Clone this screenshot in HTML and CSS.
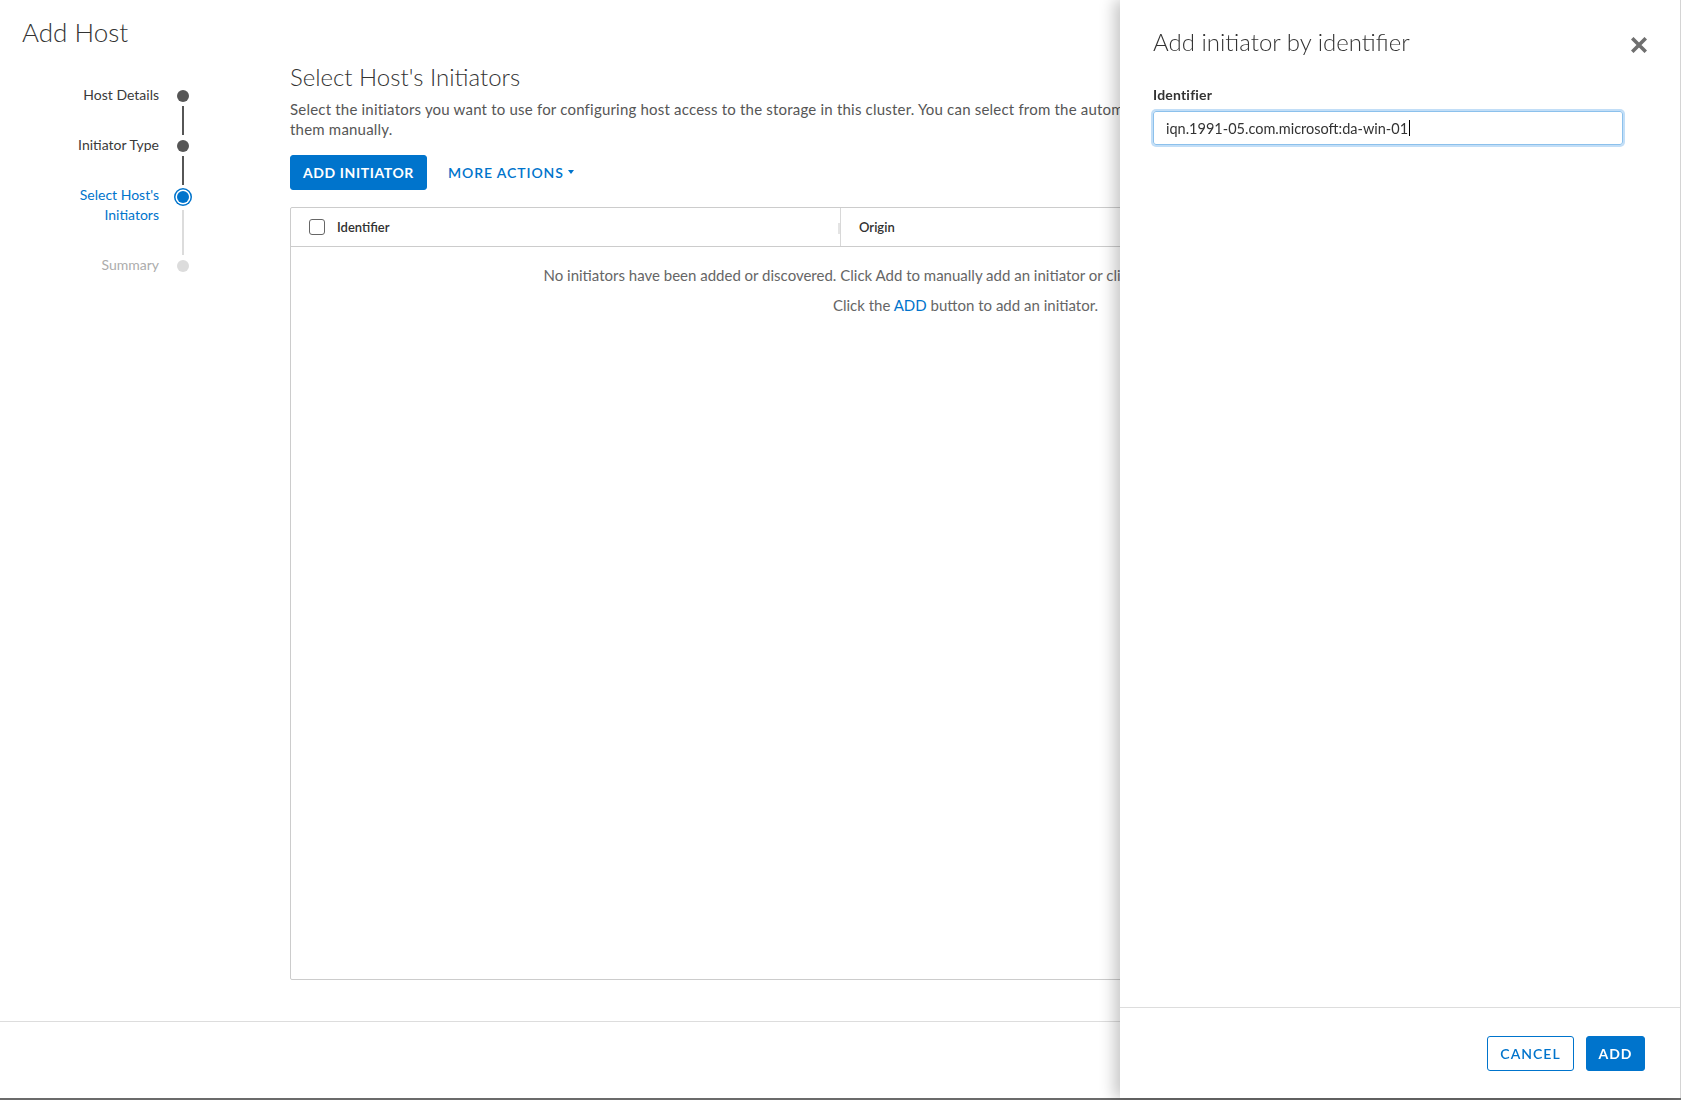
FILE: index.html
```html
<!DOCTYPE html>
<html lang="en">
<head>
<meta charset="utf-8">
<title>Add Host</title>
<link rel="stylesheet" href="styles.css">
</head>
<body>
<div class="page">
  <h1 class="page-title">Add Host</h1>
  <div class="wizard">
    <nav class="steps">
      <div class="step done">
        <div class="step-label">Host Details</div>
        <div class="step-marker"><span class="dot"></span><span class="line"></span></div>
      </div>
      <div class="step done">
        <div class="step-label">Initiator Type</div>
        <div class="step-marker"><span class="dot"></span><span class="line line-todo"></span></div>
      </div>
      <div class="step current">
        <div class="step-label">Select Host's<br>Initiators</div>
        <div class="step-marker"><span class="dot"></span><span class="line line-todo"></span></div>
      </div>
      <div class="step todo last">
        <div class="step-label">Summary</div>
        <div class="step-marker"><span class="dot"></span></div>
      </div>
    </nav>
    <main class="content">
      <h2 class="content-title">Select Host's Initiators</h2>
      <p class="desc"><span class="desc-line">Select the initiators you want to use for configuring host access to the storage in this cluster. You can select from the automatically discovered initiators or add</span><br>them manually.</p>
      <div class="toolbar">
        <button class="btn btn-primary" type="button">Add Initiator</button>
        <button class="btn btn-link" type="button">More Actions<span class="caret"></span></button>
      </div>
      <div class="grid">
        <div class="grid-head">
          <div class="col col-id"><span class="checkbox"></span><span>Identifier</span><span class="resize"></span></div>
          <div class="col col-origin">Origin</div>
        </div>
        <div class="grid-empty">
          <p>No initiators have been added or discovered. Click Add to manually add an initiator or click Discover to find initiators on the host.</p>
          <p>Click the <span class="link">ADD</span> button to add an initiator.</p>
        </div>
      </div>
    </main>
  </div>
  <footer class="page-footer"></footer>
</div>

<aside class="panel">
  <div class="panel-head">
    <h3 class="panel-title">Add initiator by identifier</h3>
    <button class="close" type="button" aria-label="Close">
      <svg width="16" height="16" viewBox="0 0 16 16"><path d="M2.5 2.5 L13.5 13.5 M13.5 2.5 L2.5 13.5" stroke="#6f6f6f" stroke-width="3.6" stroke-linecap="square" fill="none"/></svg>
    </button>
  </div>
  <div class="panel-body">
    <div class="field-label">Identifier</div>
    <div class="input" role="textbox">iqn.1991-05.com.microsoft:da-win-01<span class="cursor"></span></div>
  </div>
  <div class="panel-foot">
    <button class="btn btn-outline" type="button">Cancel</button>
    <button class="btn btn-primary btn-small" type="button">Add</button>
  </div>
</aside>
</body>
</html>
```

FILE: styles.css
```css
* { box-sizing: border-box; }

html, body {
  margin: 0;
  padding: 0;
  background: #fff;
}

body {
  font-family: Lato, "Open Sans", sans-serif;
  color: #333;
  font-size: 15px;
  overflow: hidden;
}

.page {
  height: 1100px;
  display: flex;
  flex-direction: column;
  border-bottom: 2px solid #6b6b6b;
}

.page-title {
  margin: 17px 0 0 22px;
  font-size: 26px;
  line-height: 31px;
  font-weight: 300;
  color: #333;
}

.wizard {
  flex: 1;
  display: flex;
  gap: 95px;
  padding-left: 22px;
  padding-right: 40px;
  min-height: 0;
}

/* Stepper */
.steps {
  width: 173px;
  flex: 0 0 173px;
  padding-top: 37px;
}

.step {
  display: flex;
}

.step-label {
  flex: 1;
  text-align: right;
  padding-right: 12px;
  padding-bottom: 30px;
  font-size: 14px;
  line-height: 20px;
  color: #3a3a3a;
}

.step.last .step-label { padding-bottom: 0; }
.step.current .step-label { color: #0074cc; }
.step.todo .step-label { color: #acacac; }

.step-marker {
  width: 24px;
  display: flex;
  flex-direction: column;
  align-items: center;
}

.dot {
  width: 12px;
  height: 12px;
  border-radius: 50%;
  background: #565656;
  margin-top: 5px;
  flex: 0 0 auto;
}

.step.current .dot {
  background: #0074cc;
  margin-top: 6px;
  box-shadow: 0 0 0 1.5px #fff, 0 0 0 3px #0074cc;
}

.step.todo .dot { background: #dcdcdc; }

.line {
  flex: 1;
  width: 2px;
  margin-top: 4px;
  background: #565656;
}

.step.current .line { margin-top: 7px; background: #dcdcdc; }

/* Content */
.content {
  flex: 1;
  display: flex;
  flex-direction: column;
  padding-top: 14px;
  padding-bottom: 41px;
  min-width: 0;
}

.content-title {
  margin: 0;
  font-size: 24px;
  line-height: 29px;
  font-weight: 300;
  color: #333;
}

.desc {
  margin: 8px 0 0;
  font-size: 15px;
  line-height: 20px;
  letter-spacing: 0.2px;
  color: #565656;
}

.desc-line { white-space: nowrap; }

.toolbar {
  display: flex;
  align-items: center;
  margin-top: 16px;
}

.btn {
  font-family: inherit;
  height: 35px;
  border-radius: 3px;
  border: 1px solid transparent;
  font-size: 14px;
  font-weight: 700;
  letter-spacing: 0.6px;
  text-transform: uppercase;
  cursor: pointer;
  padding: 0;
  display: inline-flex;
  align-items: center;
  justify-content: center;
}

.btn-primary {
  background: #0074cc;
  border-color: #0074cc;
  color: #fff;
  width: 137px;
}

.btn-link {
  background: transparent;
  color: #0074cc;
  margin-left: 10px;
  padding: 0 10px;
  font-weight: 600;
  letter-spacing: 0.9px;
}

.btn-outline {
  background: #fff;
  border-color: #0074cc;
  color: #0074cc;
  width: 87px;
  font-weight: 600;
  letter-spacing: 1px;
}

.btn-small { width: 59px; letter-spacing: 1px; }

.caret {
  display: inline-block;
  width: 0;
  height: 0;
  margin-left: 4px;
  margin-bottom: 2px;
  border-left: 3.5px solid transparent;
  border-right: 3.5px solid transparent;
  border-top: 4px solid #0074cc;
}

.grid {
  flex: 1;
  margin-top: 17px;
  border: 1px solid #cccccc;
  border-radius: 2px;
  display: flex;
  flex-direction: column;
}

.grid-head {
  display: flex;
  height: 39px;
  flex: 0 0 39px;
  border-bottom: 1px solid #cccccc;
  font-size: 13px;
  font-weight: 600;
  color: #313131;
}

.col {
  display: flex;
  align-items: center;
}

.col-id {
  width: 550px;
  padding-left: 18px;
  border-right: 1px solid #d8d8d8;
  position: relative;
}

.col-origin {
  padding-left: 18px;
}

.checkbox {
  width: 16px;
  height: 16px;
  border: 1px solid #666;
  border-radius: 3px;
  margin-right: 12px;
  background: #fff;
}

.resize {
  position: absolute;
  right: 0;
  top: 15px;
  width: 2px;
  height: 11px;
  background: #e4e4e4;
}

.grid-empty {
  padding-top: 18px;
  text-align: center;
  color: #666;
  font-size: 15px;
  line-height: 20px;
}

.grid-empty p { margin: 0 0 10px; white-space: nowrap; }

.link { color: #0074cc; }

.page-footer {
  flex: 0 0 77px;
  border-top: 1px solid #dddddd;
}

/* Side panel */
.panel {
  position: fixed;
  top: 0;
  right: 0;
  bottom: 2px;
  width: 561px;
  background: #fff;
  border-right: 1px solid #d4d4d4;
  box-shadow: -6px 0 14px rgba(0, 0, 0, 0.22);
  display: flex;
  flex-direction: column;
}

.panel-head {
  display: flex;
  justify-content: space-between;
  align-items: flex-start;
  padding: 27px 33px 0 33px;
}

.panel-title {
  margin: 0;
  font-size: 24px;
  line-height: 29px;
  font-weight: 300;
  color: #333;
}

.close {
  border: 0;
  background: none;
  padding: 0;
  margin-top: 10px;
  width: 16px;
  height: 16px;
  cursor: pointer;
}

.close svg { display: block; }

.panel-body {
  flex: 1;
  padding: 29px 33px 0 33px;
}

.field-label {
  font-size: 14px;
  line-height: 20px;
  font-weight: 700;
  letter-spacing: 0.2px;
  color: #333;
}

.input {
  margin-top: 6px;
  width: 470px;
  height: 34px;
  border: 1px solid #8cc1ec;
  border-radius: 3px;
  box-shadow: 0 0 0 2px #c2def7;
  padding-left: 12px;
  display: flex;
  align-items: center;
  font-size: 14.5px;
  color: #333;
}

.cursor {
  display: inline-block;
  width: 1px;
  height: 16px;
  background: #000;
  margin-left: 1px;
}

.panel-foot {
  flex: 0 0 91px;
  border-top: 1px solid #dddddd;
  display: flex;
  justify-content: flex-end;
  align-items: center;
  gap: 12px;
  padding-right: 35px;
}
```
